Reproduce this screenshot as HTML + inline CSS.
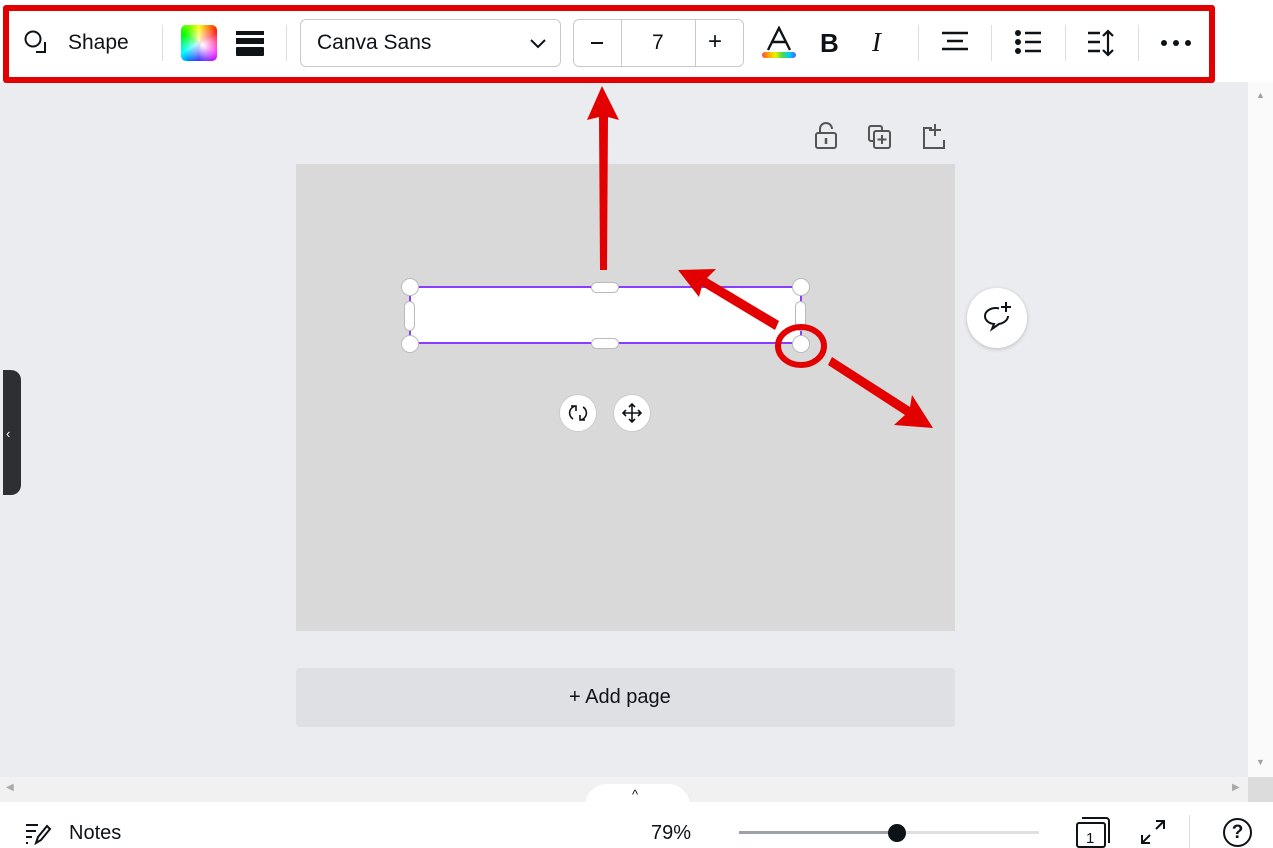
<!DOCTYPE html>
<html><head><style>
*{margin:0;padding:0;box-sizing:border-box}
body{width:1273px;height:848px;overflow:hidden;background:#ebecf0;font-family:"Liberation Sans",sans-serif;position:relative;color:#0e1318}
.a{position:absolute}
.sep{position:absolute;top:25px;width:1px;height:36px;background:#dcdde0}
</style></head><body>
<div class="a" style="left:0;top:0;width:1273px;height:82px;background:#fff"></div>
<div class="a" style="left:1248px;top:82px;width:25px;height:695px;background:#fafafa"></div>
<div class="a" style="left:1256px;top:90px;font-size:9px;color:#a0a0a0">▲</div>
<div class="a" style="left:1256px;top:757px;font-size:9px;color:#a0a0a0">▼</div>
<div class="a" style="left:3px;top:5px;width:1212px;height:78px;border:6px solid #e30000;border-radius:3px;background:#fff"></div>
<!-- toolbar -->
<svg class="a" style="left:23px;top:29px" width="30" height="26" viewBox="0 0 30 26"><circle cx="10" cy="10" r="7.5" fill="none" stroke="#0e1318" stroke-width="2"/><path d="M22 13v10H13" fill="none" stroke="#0e1318" stroke-width="2"/></svg>
<div class="a" style="left:68px;top:31px;font-size:21px">Shape</div>
<div class="sep" style="left:162px"></div>
<div class="a" style="left:181px;top:25px;width:36px;height:36px;border-radius:5px;background:conic-gradient(from 0deg,#ff0 ,#f00,#f0f,#00f,#0ff,#0f0,#ff0)"><div style="width:100%;height:100%;border-radius:5px;background:radial-gradient(circle at 60% 55%,#fff 0,rgba(255,255,255,.0) 70%)"></div></div>
<div class="a" style="left:236px;top:31px;width:28px;height:4px;background:#0e1318"></div>
<div class="a" style="left:236px;top:38px;width:28px;height:6px;background:#0e1318"></div>
<div class="a" style="left:236px;top:47px;width:28px;height:9px;background:#0e1318;border-radius:1px"></div>
<div class="sep" style="left:286px"></div>
<div class="a" style="left:300px;top:19px;width:261px;height:48px;border:1px solid #c8c9cd;border-radius:6px"></div>
<div class="a" style="left:317px;top:31px;font-size:21px">Canva Sans</div>
<svg class="a" style="left:529px;top:37px" width="18" height="12"><path d="M2 3l7 7 7-7" fill="none" stroke="#0e1318" stroke-width="2"/></svg>
<div class="a" style="left:573px;top:19px;width:171px;height:48px;border:1px solid #c8c9cd;border-radius:6px"></div>
<div class="a" style="left:621px;top:20px;width:1px;height:46px;background:#c8c9cd"></div>
<div class="a" style="left:695px;top:20px;width:1px;height:46px;background:#c8c9cd"></div>
<div class="a" style="left:591px;top:42px;width:12px;height:2px;background:#0e1318"></div>
<div class="a" style="left:652px;top:31px;font-size:21px">7</div>
<div class="a" style="left:708px;top:28px;font-size:24px">+</div>
<svg class="a" style="left:765px;top:26px" width="28" height="26" fill="none" stroke="#0e1318" stroke-width="2.4"><path d="M3 24L14 2l11 22M7 16h14"/></svg>
<div class="a" style="left:762px;top:52px;width:34px;height:6px;border-radius:3px;background:linear-gradient(90deg,#f44,#fa0,#ee0,#4d4,#0cf,#46f)"></div>
<div class="a" style="left:820px;top:28px;font-size:26px;font-weight:bold">B</div>
<div class="a" style="left:872px;top:27px;font-size:27px;font-style:italic;font-family:'Liberation Serif',serif">I</div>
<div class="sep" style="left:918px"></div>
<svg class="a" style="left:940px;top:30px" width="30" height="24"><path d="M2 3h26M7 11h16M2 19h26" stroke="#0e1318" stroke-width="2.4"/></svg>
<div class="sep" style="left:991px"></div>
<svg class="a" style="left:1013px;top:28px" width="30" height="30"><circle cx="5" cy="5" r="3" fill="#0e1318"/><circle cx="5" cy="14" r="3" fill="#0e1318"/><circle cx="5" cy="23" r="3" fill="#0e1318"/><path d="M12 5h16M12 14h16M12 23h16" stroke="#0e1318" stroke-width="2.4"/></svg>
<div class="sep" style="left:1065px"></div>
<svg class="a" style="left:1086px;top:28px" width="32" height="30"><path d="M2 5h12M2 14h12M2 23h12" stroke="#0e1318" stroke-width="2.4"/><path d="M22 3v24M17 8l5-5 5 5M17 22l5 5 5-5" fill="none" stroke="#0e1318" stroke-width="2.2"/></svg>
<div class="sep" style="left:1138px"></div>
<svg class="a" style="left:1160px;top:37px" width="32" height="12"><circle cx="4" cy="6" r="3" fill="#0e1318"/><circle cx="16" cy="6" r="3" fill="#0e1318"/><circle cx="28" cy="6" r="3" fill="#0e1318"/></svg>
<!-- page icons -->
<svg class="a" style="left:812px;top:120px;" width="140" height="32" fill="none" stroke="#555" stroke-width="2"><rect x="4" y="13" width="20" height="15" rx="2"/><path d="M8 13V9a6 6 0 0 1 12 0"/><path d="M14 18v6" stroke-width="2.5"/><rect x="57" y="6" width="13" height="15" rx="2"/><rect x="62" y="11" width="16" height="17" rx="2" fill="#ebecf0"/><path d="M70 15v9M65.5 19.5h9"/><path d="M120 8h-8v20h20v-8M123 4v12M117 10h12"/></svg>
<!-- page -->
<div class="a" style="left:296px;top:164px;width:659px;height:467px;background:#d9d9d9"></div>
<div class="a" style="left:296px;top:668px;width:659px;height:59px;background:#dfe0e4;border-radius:4px"></div>
<div class="a" style="left:569px;top:686px;font-size:20px">+ Add page</div>
<!-- selected shape -->
<div class="a" style="left:409px;top:286px;width:393px;height:58px;background:#fff;border:2px solid #8b3dff"></div>
<div class="a" style="left:401px;top:278px;width:18px;height:18px;border-radius:50%;background:#fff;border:1px solid #bbb"></div>
<div class="a" style="left:792px;top:278px;width:18px;height:18px;border-radius:50%;background:#fff;border:1px solid #bbb"></div>
<div class="a" style="left:401px;top:335px;width:18px;height:18px;border-radius:50%;background:#fff;border:1px solid #bbb"></div>
<div class="a" style="left:792px;top:335px;width:18px;height:18px;border-radius:50%;background:#fff;border:1px solid #bbb"></div>
<div class="a" style="left:591px;top:282px;width:28px;height:11px;border-radius:6px;background:#fff;border:1px solid #bbb"></div>
<div class="a" style="left:591px;top:338px;width:28px;height:11px;border-radius:6px;background:#fff;border:1px solid #bbb"></div>
<div class="a" style="left:404px;top:301px;width:11px;height:30px;border-radius:6px;background:#fff;border:1px solid #bbb"></div>
<div class="a" style="left:795px;top:301px;width:11px;height:30px;border-radius:6px;background:#fff;border:1px solid #bbb"></div>
<div class="a" style="left:559px;top:394px;width:38px;height:38px;border-radius:50%;background:#fff;border:1px solid #ccc"></div>
<div class="a" style="left:613px;top:394px;width:38px;height:38px;border-radius:50%;background:#fff;border:1px solid #ccc"></div>
<svg class="a" style="left:566px;top:401px" width="24" height="24" fill="none" stroke="#0e1318" stroke-width="1.6"><path d="M10 5a7 7 0 0 0-3 13M14 19a7 7 0 0 0 3-13M5 5h5v5M19 19h-5v-5"/></svg>
<svg class="a" style="left:620px;top:401px" width="24" height="24" fill="none" stroke="#0e1318" stroke-width="1.6"><path d="M12 3v18M3 12h18M9 6l3-3 3 3M9 18l3 3 3-3M6 9l-3 3 3 3M18 9l3 3-3 3"/></svg>
<!-- comment -->
<div class="a" style="left:967px;top:288px;width:60px;height:60px;border-radius:50%;background:#fff;box-shadow:0 1px 4px rgba(0,0,0,.2)"></div>
<svg class="a" style="left:980px;top:300px" width="34" height="34" fill="none" stroke="#0e1318" stroke-width="2"><path d="M19 8.5c-1-.3-2-.5-3-.5-6 0-11 3.5-11 8s4 7.5 9 8l-2 5 7-5c5-1 9-4 9-8"/><path d="M26 2v10M21 7h10"/></svg>
<!-- left tab -->
<div class="a" style="left:3px;top:370px;width:18px;height:125px;background:#2d2f33;border-radius:0 10px 10px 0"></div>
<div class="a" style="left:6px;top:426px;color:#fff;font-size:13px">‹</div>
<!-- arrows -->
<svg class="a" style="left:0;top:0" width="1273" height="848"><g fill="#e30000"><polygon points="602,86 619,120 608,117 607,270 600,270 599,117 587,120"/><polygon points="678,270 716,269 707,278 779,321 775,330 702,286 699,297"/><polygon points="933,428 894,425 905,415 828,365 832,357 910,407 912,395"/></g><ellipse cx="801" cy="346" rx="23" ry="19" fill="none" stroke="#e30000" stroke-width="6"/></svg>
<!-- bottom -->
<div class="a" style="left:0;top:777px;width:1273px;height:25px;background:#f1f1f1"></div>
<div class="a" style="left:1248px;top:777px;width:25px;height:25px;background:#dcdcdc"></div>
<div class="a" style="left:6px;top:782px;font-size:10px;color:#aaa">◀</div>
<div class="a" style="left:1232px;top:782px;font-size:10px;color:#aaa">▶</div>
<div class="a" style="left:0;top:802px;width:1273px;height:46px;background:#fff"></div>
<div class="a" style="left:585px;top:784px;width:105px;height:22px;background:#fff;border-radius:30px 30px 0 0"></div>
<div class="a" style="left:632px;top:787px;font-size:13px">^</div>
<svg class="a" style="left:24px;top:822px" width="30" height="24" fill="none" stroke="#0e1318" stroke-width="2"><path d="M2 3h12M2 9h10M2 15h6M2 21h2M12 21l2-6 9-11 3 3-9 11z"/></svg>
<div class="a" style="left:69px;top:822px;font-size:20px">Notes</div>
<div class="a" style="left:651px;top:822px;font-size:20px">79%</div>
<div class="a" style="left:739px;top:831px;width:300px;height:3px;background:#dfe0e4"></div>
<div class="a" style="left:739px;top:831px;width:158px;height:3px;background:#9da1a8"></div>
<div class="a" style="left:888px;top:824px;width:18px;height:18px;border-radius:50%;background:#0e1318"></div>
<svg class="a" style="left:1074px;top:815px" width="40" height="33" fill="none" stroke="#0e1318" stroke-width="2"><rect x="3" y="8" width="28" height="24" rx="2"/><path d="M8 3h24a3 3 0 0 1 3 3v22"/><text x="12" y="28" font-size="15" fill="#0e1318" stroke="none" font-family="Liberation Sans">1</text></svg>
<svg class="a" style="left:1139px;top:818px" width="28" height="28" fill="none" stroke="#0e1318" stroke-width="2"><path d="M17 3h8v8M25 3l-8 8M11 25H3v-8M3 25l8-8"/></svg>
<div class="a" style="left:1189px;top:815px;width:1px;height:33px;background:#dcdde0"></div>
<div class="a" style="left:1223px;top:818px;width:29px;height:29px;border:2px solid #0e1318;border-radius:50%;text-align:center;font-size:19px;line-height:26px;font-weight:bold">?</div>
</body></html>
